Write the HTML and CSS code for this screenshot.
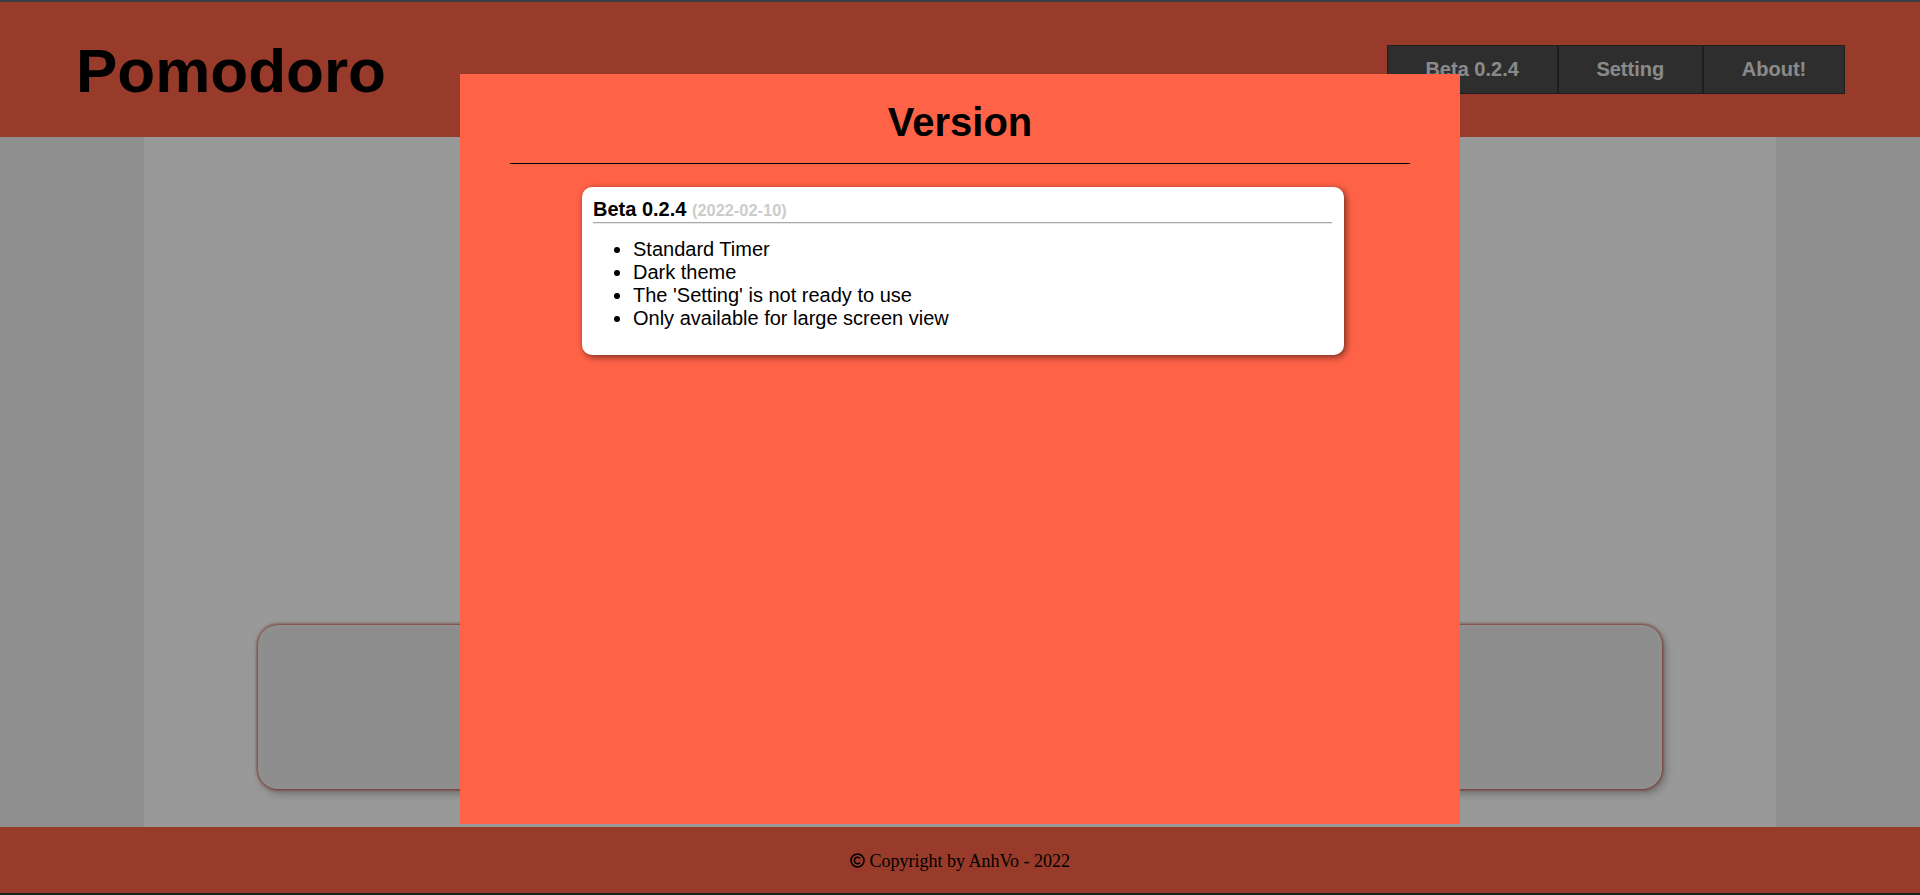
FILE: index.html
```html
<!DOCTYPE html>
<html lang="en">
<head>
<meta charset="utf-8">
<title>Pomodoro</title>
<link rel="stylesheet" href="styles.css">
</head>
<body>
<div class="page">
  <div class="topstrip"></div>
  <header class="header">
    <h1 class="logo">Pomodoro</h1>
    <nav class="nav">
      <button class="nav-btn">Beta 0.2.4</button>
      <button class="nav-btn">Setting</button>
      <button class="nav-btn">About!</button>
    </nav>
  </header>
  <main class="main">
    <div class="content">
      <div class="timer-card"></div>
    </div>
  </main>
  <footer class="footer">
    <p class="copyright"><svg class="copy-icon" viewBox="0 0 16 16" width="15" height="15" aria-hidden="true"><circle cx="8" cy="8" r="6.9" fill="none" stroke="#000" stroke-width="1.7"/><path d="M10.7 5.9 A3.4 3.4 0 1 0 10.7 10.1" fill="none" stroke="#000" stroke-width="1.7"/></svg> Copyright by AnhVo - 2022</p>
  </footer>
  <div class="bottomstrip"></div>
</div>

<div class="overlay"></div>
<section class="modal">
  <h2 class="modal-title">Version</h2>
  <hr class="modal-rule">
  <article class="version-card">
    <div class="version-head"><span class="version-name">Beta 0.2.4</span> <span class="version-date">(2022-02-10)</span></div>
    <hr class="version-rule">
    <ul class="version-list">
      <li>Standard Timer</li>
      <li>Dark theme</li>
      <li>The 'Setting' is not ready to use</li>
      <li>Only available for large screen view</li>
    </ul>
  </article>
</section>
</body>
</html>
```

FILE: styles.css
```css
* { box-sizing: border-box; }

html, body {
  margin: 0;
  padding: 0;
  height: 100%;
}

body {
  font-family: "Liberation Sans", Arial, sans-serif;
  background: #eeeeee;
  overflow: hidden;
}

.page {
  display: flex;
  flex-direction: column;
  height: 895px;
}

.topstrip {
  height: 2px;
  background: #63686d;
}

.bottomstrip {
  height: 2px;
  background: #2f352f;
}

.header {
  height: 135px;
  background: #ff6347;
  display: flex;
  justify-content: space-between;
  align-items: flex-start;
  padding: 0 75px 0 76px;
}

.logo {
  margin: 33px 0 0 0;
  font-size: 62px;
  font-weight: bold;
  color: #000;
  line-height: normal;
}

.nav {
  display: flex;
  margin-top: 43px;
}

.nav-btn {
  font-family: "Liberation Sans", Arial, sans-serif;
  font-size: 20px;
  font-weight: bold;
  line-height: 23px;
  color: #e6e6e6;
  background: #4e4e4e;
  border: 1px solid #333333;
  padding: 12px 37.8px;
  margin: 0;
}

.main {
  flex: 1;
  display: flex;
  justify-content: center;
  background: #eeeeee;
}

.content {
  width: 85%;
  background: #ffffff;
  display: flex;
  flex-direction: column;
  align-items: center;
}

.timer-card {
  margin-top: auto;
  margin-bottom: 38px;
  width: 86%;
  height: 164px;
  border-radius: 20px;
  background: #ececec;
  box-shadow: 0 0 3px 1px rgba(200, 80, 60, 0.9), 3px 4px 10px rgba(0, 0, 0, 0.3), inset 0 0 8px rgba(255, 255, 255, 0.35);
}

.footer {
  height: 66px;
  background: #ff6347;
  display: flex;
  align-items: center;
  justify-content: center;
  padding-top: 3px;
}

.copyright {
  margin: 0;
  font-family: "Liberation Serif", "Times New Roman", serif;
  font-size: 18px;
  color: #000;
}

.copy-icon {
  vertical-align: -1px;
}

.overlay {
  position: fixed;
  inset: 0;
  background: rgba(0, 0, 0, 0.4);
}

.modal {
  position: fixed;
  top: 74px;
  left: 0;
  right: 0;
  margin: 0 auto;
  width: 1000px;
  height: 750px;
  background: #ff6347;
  padding-top: 25px;
}

.modal-title {
  margin: 0;
  text-align: center;
  font-size: 40px;
  font-weight: bold;
  line-height: 46px;
  color: #000;
}

.modal-rule {
  width: 90%;
  margin: 18px auto 0;
  border: 0;
  border-top: 1px solid #000;
  height: 0;
}

.version-card {
  margin: 23px 0 0 122px;
  width: 762px;
  background: #ffffff;
  border-radius: 10px;
  padding: 11px 12px 11px 11px;
  box-shadow: 2px 2px 7px rgba(0, 0, 0, 0.55);
  color: #000;
}

.version-head {
  font-size: 20px;
  line-height: 23px;
}

.version-name {
  font-weight: bold;
}

.version-date {
  font-size: 16.4px;
  font-weight: bold;
  color: #cccccc;
}

.version-rule {
  margin: 0;
  height: 0;
  border: 0;
  border-top: 1px solid #a8a8a8;
  border-bottom: 1px solid #e6e6e6;
}

.version-list {
  margin: 14px 0 14px 0;
  padding-left: 40px;
  font-size: 20px;
  line-height: 23px;
}
```
